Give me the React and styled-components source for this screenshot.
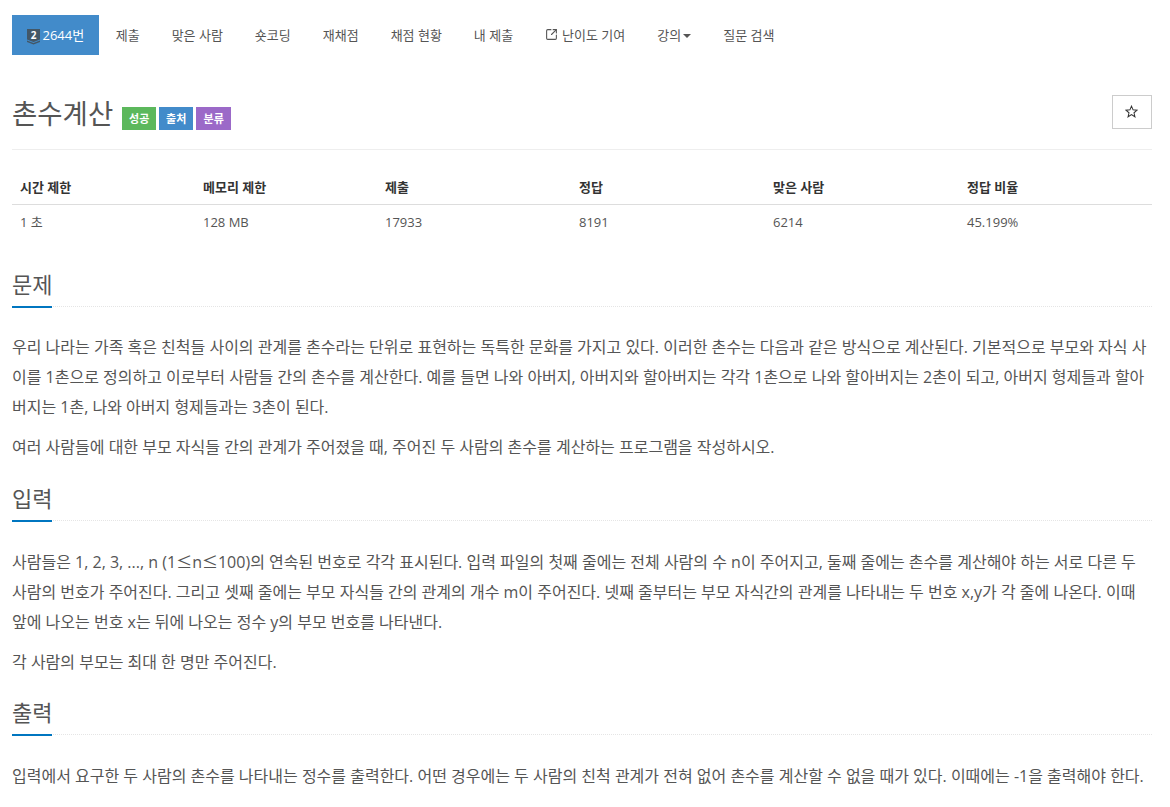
import React from "react";
import styled, { createGlobalStyle } from "styled-components";
import { SquareArrowOutUpRight } from "lucide-react";

const Global = createGlobalStyle`
  html, body { margin: 0; padding: 0; background: #fff; }
  body {
    font-family: "Open Sans", "Noto Sans CJK KR", sans-serif;
    font-size: 14px;
    color: #555;
    overflow: hidden;
  }
  * { box-sizing: border-box; }
`;

const Page = styled.div`
  width: 1140px;
  margin: 0 0 0 12px;
  height: 807px;
  overflow: hidden;
`;

const Nav = styled.ul`
  display: flex;
  list-style: none;
  margin: 0;
  padding: 15px 0 0;
  height: 55px;
`;

const NavItem = styled.li`
  display: flex;
  align-items: center;
  gap: ${(p) => (p.$gap ? p.$gap : 0)}px;
  height: 40px;
  padding: 0 ${(p) => (p.$active ? "14.5px" : "16px")} 2px;
  margin-right: ${(p) => (p.$active ? 1 : 0)}px;
  font-size: 13px;
  color: ${(p) => (p.$active ? "#fff" : "#555")};
  background: ${(p) => (p.$active ? "#428bca" : "transparent")};
  white-space: nowrap;
`;

const TierIcon = styled.svg`
  width: 14px;
  height: 16px;
  margin: 5px 2px 0 0;
  flex: none;
  overflow: visible;
`;

const Caret = styled.span`
  width: 0;
  height: 0;
  margin-left: 2px;
  margin-top: 3px;
  border-top: 4px solid #555;
  border-left: 4px solid transparent;
  border-right: 4px solid transparent;
`;

const PageHeader = styled.div`
  display: flex;
  align-items: flex-start;
  justify-content: space-between;
  margin-top: 40px;
  height: 55px;
  border-bottom: 1px solid #eee;
`;

const Title = styled.div`
  display: flex;
  align-items: center;
  height: 38px;
  font-size: 27.5px;
  line-height: 38px;
  color: #555;
`;

const Labels = styled.span`
  display: flex;
  gap: 3px;
  margin-left: 9px;
  margin-top: 9px;
`;

const Label = styled.span`
  display: inline-flex;
  align-items: center;
  justify-content: center;
  width: ${(p) => p.$w}px;
  height: 23px;
  background: ${(p) => p.$bg};
  color: #fff;
  font-size: 11px;
  font-weight: 700;
`;

const StarButton = styled.button`
  display: flex;
  align-items: center;
  justify-content: center;
  width: 40px;
  height: 34px;
  padding: 0 2px 2px 0;
  border: 1px solid #ccc;
  background: #fff;
  color: #333;
`;

const Stats = styled.table`
  width: 100%;
  margin-top: 20px;
  border-collapse: collapse;
  font-size: 13px;
  color: #555;
  table-layout: fixed;
  th {
    text-align: left;
    font-weight: 700;
    color: #333;
    height: 34px;
    padding: 0 8px;
    border-bottom: 1px solid #ddd;
  }
  td {
    height: 35px;
    padding: 0 8px;
  }
`;

const Section = styled.section`
  margin-top: ${(p) => p.$top}px;
`;

const Heading = styled.h2`
  margin: 0 0 ${(p) => p.$after}px;
  height: 41px;
  font-size: 22px;
  font-weight: 400;
  line-height: 36px;
  color: #555;
  border-bottom: 1px dotted #e5e5e5;
`;

const HeadingText = styled.span`
  display: inline-block;
  height: 42px;
  border-bottom: 2px solid #0076c0;
`;

const Para = styled.p`
  margin: 0 0 10px;
  font-size: 16px;
  line-height: 30px;
  color: #555;
`;

const WideSign = styled.span`
  font-family: "Noto Sans CJK KR", sans-serif;
`;

const Tier = () => (
  <TierIcon viewBox="0 0 14 16">
    <path d="M0 0H13V10.5L6.5 13L0 10.5Z" fill="#435767" />
    <path d="M0 11.5L6.5 14L13 11.5V13L6.5 15.5L0 13Z" fill="#435767" />
    <text x="6.5" y="9.5" textAnchor="middle" fontSize="10" fontWeight="700" fill="#fff" fontFamily="Open Sans, sans-serif">2</text>
  </TierIcon>
);

const StarIcon = () => (
  <svg width="13" height="13" viewBox="0 0 14 14">
    <path d="M7 1.2L8.7 5.2L13 5.6L9.7 8.4L10.7 12.7L7 10.4L3.3 12.7L4.3 8.4L1 5.6L5.3 5.2Z" fill="none" stroke="#333" strokeWidth="1.1" />
  </svg>
);

const navItems = ["제출", "맞은 사람", "숏코딩", "재채점", "채점 현황", "내 제출"];
const heads = [["시간 제한", 183], ["메모리 제한", 182], ["제출", 194], ["정답", 194], ["맞은 사람", 194], ["정답 비율", 193]];
const vals = ["1 초", "128 MB", "17933", "8191", "6214", "45.199%"];

export default function App() {
  return (
    <Page>
      <Global />
      <Nav>
        <NavItem $active><Tier />2644번</NavItem>
        {navItems.map((t) => <NavItem key={t}>{t}</NavItem>)}
        <NavItem $gap={4}><SquareArrowOutUpRight size={13} />난이도 기여</NavItem>
        <NavItem>강의<Caret /></NavItem>
        <NavItem>질문 검색</NavItem>
      </Nav>
      <PageHeader>
        <Title>
          촌수계산
          <Labels>
            <Label $bg="#5cb85c" $w={34}>성공</Label>
            <Label $bg="#428bca" $w={34}>출처</Label>
            <Label $bg="#9b69c8" $w={35}>분류</Label>
          </Labels>
        </Title>
        <StarButton><StarIcon /></StarButton>
      </PageHeader>
      <Stats>
        <colgroup>{heads.map(([h, w]) => <col key={h} style={{ width: w }} />)}</colgroup>
        <thead><tr>{heads.map(([h]) => <th key={h}>{h}</th>)}</tr></thead>
        <tbody><tr>{vals.map((v) => <td key={v}>{v}</td>)}</tr></tbody>
      </Stats>
      <Section $top={27}>
        <Heading $after={25}><HeadingText>문제</HeadingText></Heading>
        <Para>우리 나라는 가족 혹은 친척들 사이의 관계를 촌수라는 단위로 표현하는 독특한 문화를 가지고 있다. 이러한 촌수는 다음과 같은 방식으로 계산된다. 기본적으로 부모와 자식 사이를 1촌으로 정의하고 이로부터 사람들 간의 촌수를 계산한다. 예를 들면 나와 아버지, 아버지와 할아버지는 각각 1촌으로 나와 할아버지는 2촌이 되고, 아버지 형제들과 할아버지는 1촌, 나와 아버지 형제들과는 3촌이 된다.</Para>
        <Para>여러 사람들에 대한 부모 자식들 간의 관계가 주어졌을 때, 주어진 두 사람의 촌수를 계산하는 프로그램을 작성하시오.</Para>
      </Section>
      <Section $top={18}>
        <Heading $after={25}><HeadingText>입력</HeadingText></Heading>
        <Para>사람들은 1, 2, 3, ..., n (1<WideSign>≤</WideSign>n<WideSign>≤</WideSign>100)의 연속된 번호로 각각 표시된다. 입력 파일의 첫째 줄에는 전체 사람의 수 n이 주어지고, 둘째 줄에는 촌수를 계산해야 하는 서로 다른 두 사람의 번호가 주어진다. 그리고 셋째 줄에는 부모 자식들 간의 관계의 개수 m이 주어진다. 넷째 줄부터는 부모 자식간의 관계를 나타내는 두 번호 x,y가 각 줄에 나온다. 이때 앞에 나오는 번호 x는 뒤에 나오는 정수 y의 부모 번호를 나타낸다.</Para>
        <Para>각 사람의 부모는 최대 한 명만 주어진다.</Para>
      </Section>
      <Section $top={17}>
        <Heading $after={26}><HeadingText>출력</HeadingText></Heading>
        <Para>입력에서 요구한 두 사람의 촌수를 나타내는 정수를 출력한다. 어떤 경우에는 두 사람의 친척 관계가 전혀 없어 촌수를 계산할 수 없을 때가 있다. 이때에는 -1을 출력해야 한다.</Para>
      </Section>
    </Page>
  );
}
